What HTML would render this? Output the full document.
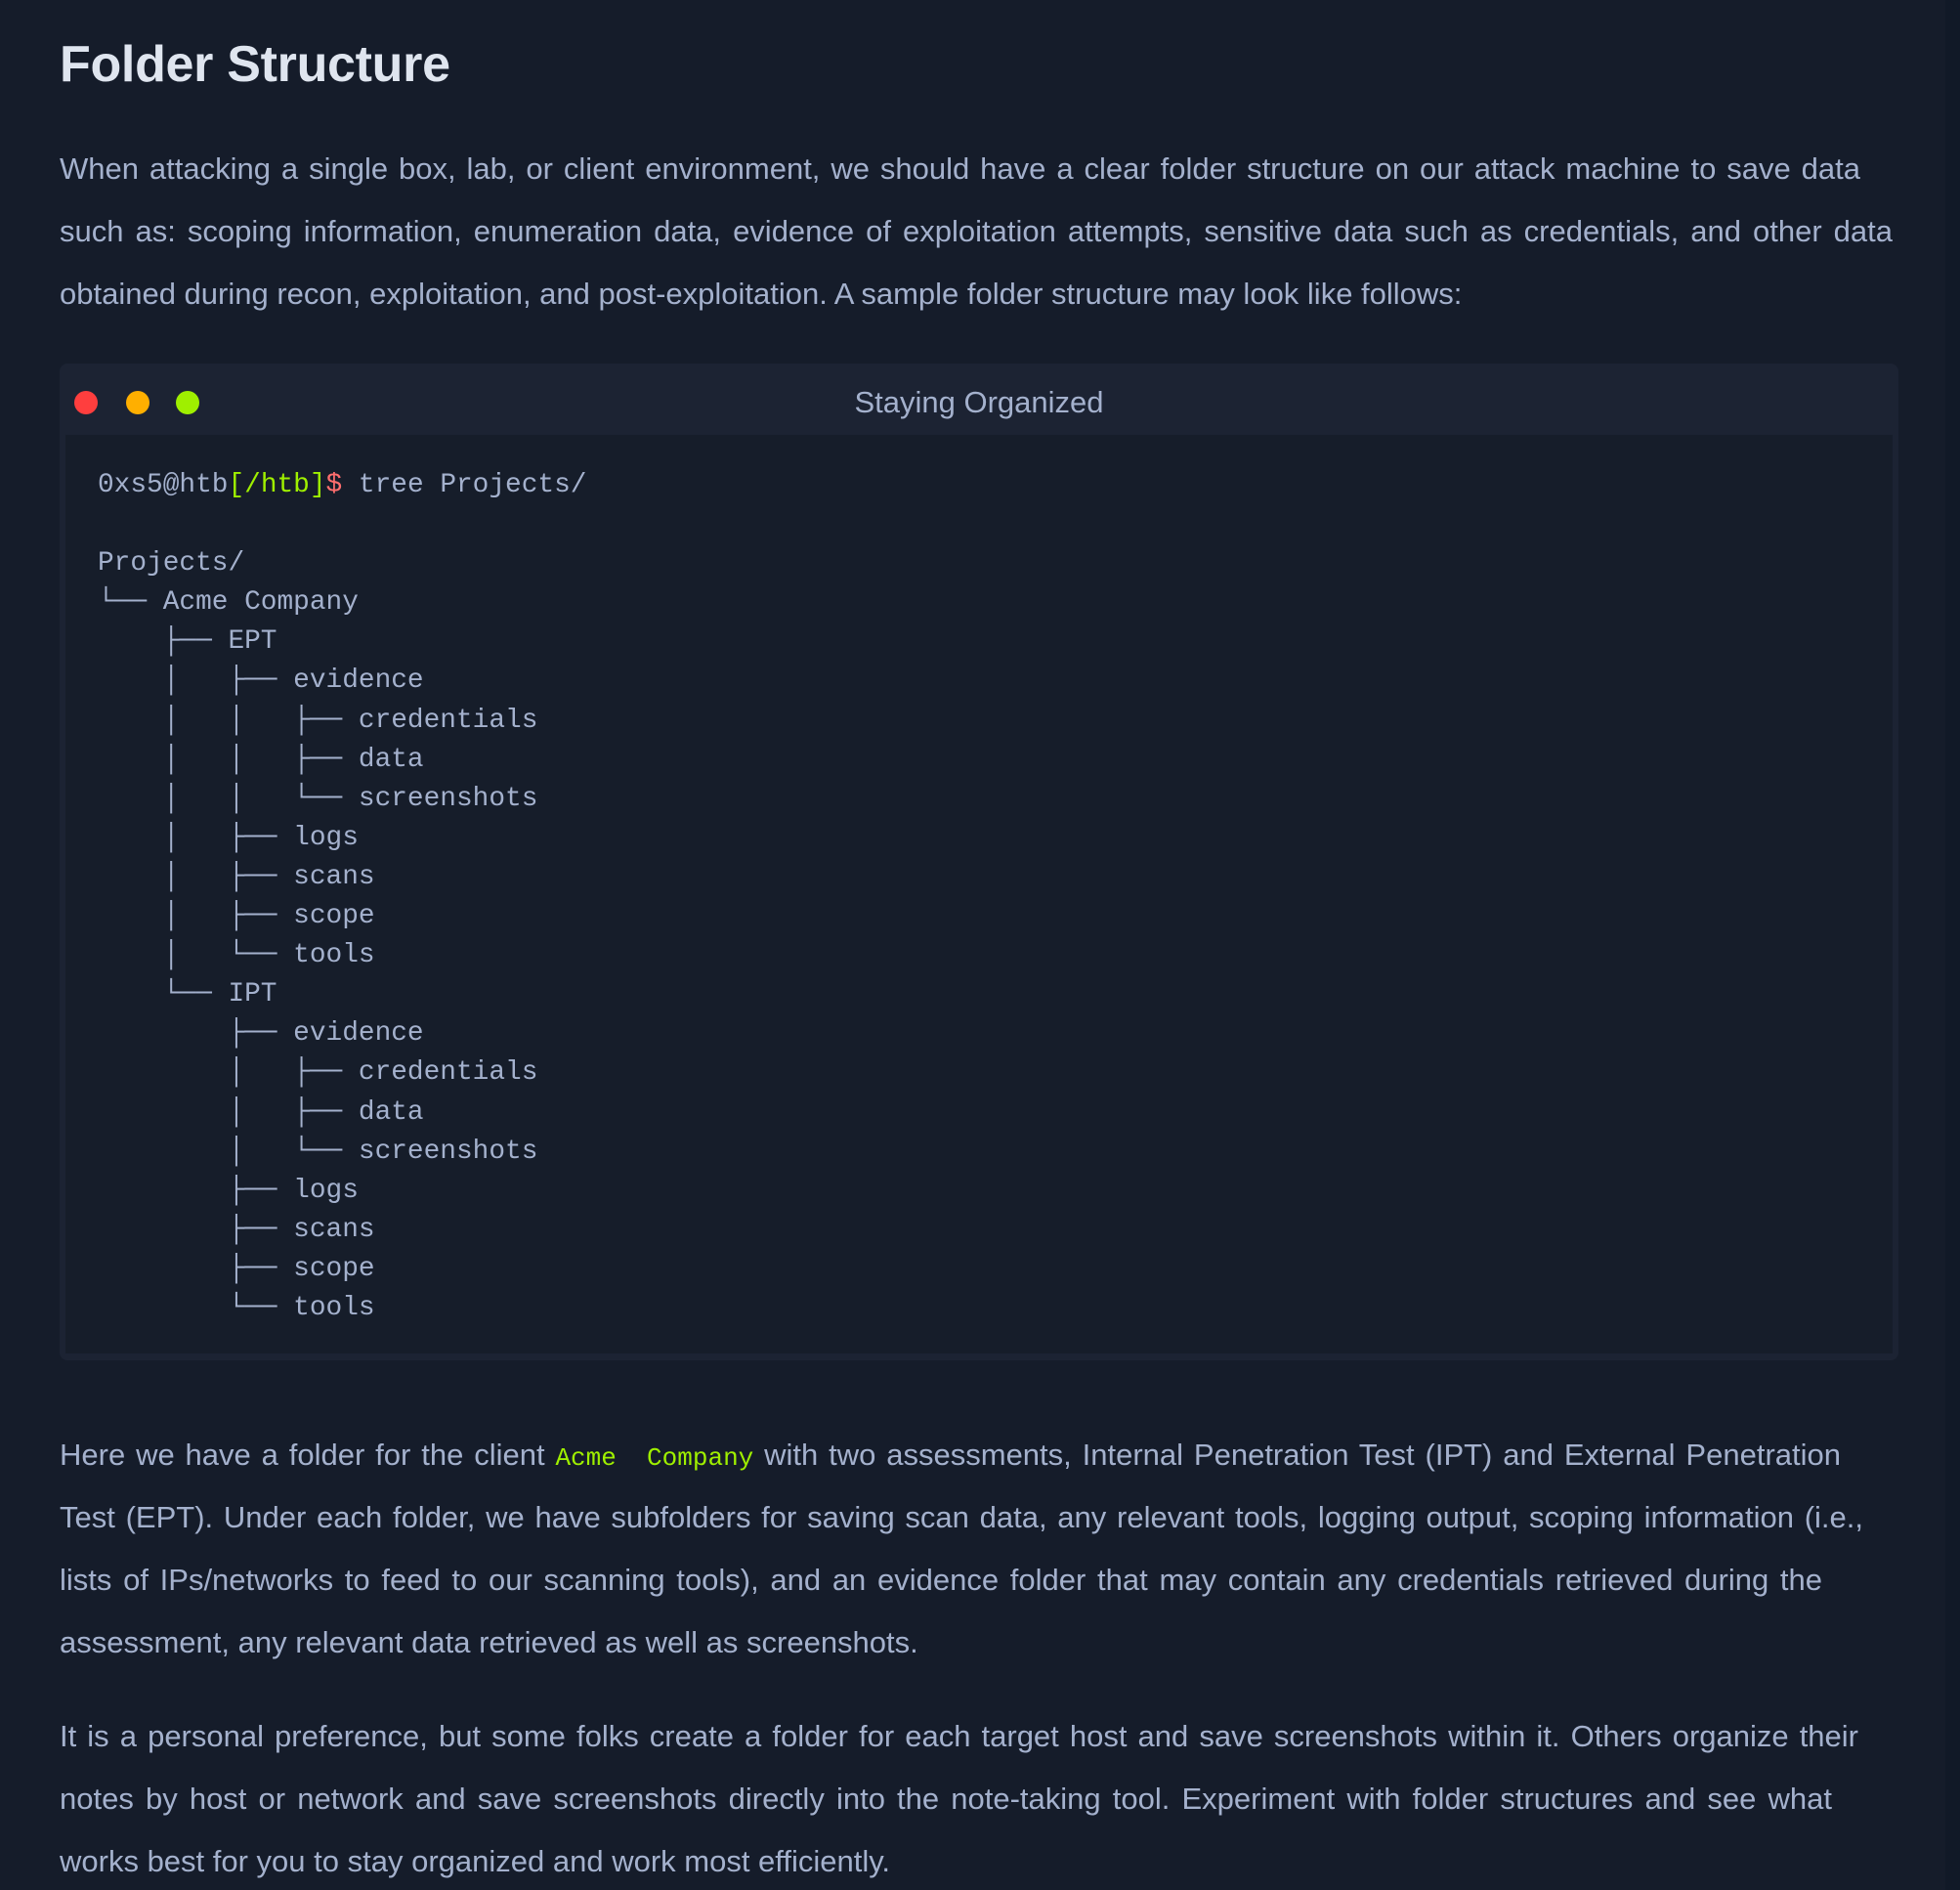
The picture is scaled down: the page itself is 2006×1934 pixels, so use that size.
<!DOCTYPE html>
<html><head><meta charset="utf-8"><style>
html,body{margin:0;padding:0;}
body{width:2006px;height:1934px;background:#151c2a;position:relative;overflow:hidden;font-family:"Liberation Sans",sans-serif;color:#a4b1cd;}
.strip{position:absolute;right:0;top:0;width:15px;height:1934px;background:#111927;}
h1{position:absolute;left:61px;top:31px;margin:0;font-size:52px;line-height:70px;font-weight:bold;color:#dfe5ef;letter-spacing:-0.3px;}
.l{position:absolute;left:61px;font-size:31px;line-height:40px;white-space:nowrap;}
.j{text-align:justify;text-align-last:justify;}
.box{position:absolute;left:61px;top:372px;width:1882px;height:1020px;background:#1c2333;border-radius:8px;}
.body{position:absolute;left:6px;top:73px;width:1870px;height:940px;background:#161d2a;}
.dot{position:absolute;top:28px;width:24px;height:24px;border-radius:50%;}
.title{position:absolute;left:0;width:100%;top:20px;text-align:center;font-size:31px;line-height:40px;color:#a4b1cd;}
pre{position:absolute;left:100px;top:477px;margin:0;font-family:"Liberation Mono","DejaVu Sans Mono",monospace;font-size:27.8px;line-height:40.1px;color:#a4b1cd;}
.g{color:#9fef00}.r{color:#ff6e6e}
code{display:inline-block;font-family:"Liberation Mono",monospace;font-size:26px;color:#9fef00;white-space:pre;}
</style></head><body>
<div class="strip"></div>
<h1>Folder Structure</h1>
<div class="l j" style="top:153px;width:1843px">When attacking a single box, lab, or client environment, we should have a clear folder structure on our attack machine to save data</div>
<div class="l j" style="top:217px;width:1876px">such as: scoping information, enumeration data, evidence of exploitation attempts, sensitive data such as credentials, and other data</div>
<div class="l" style="top:281px">obtained during recon, exploitation, and post-exploitation. A sample folder structure may look like follows:</div>

<div class="box">
<div class="dot" style="left:15px;background:#ff3e3e"></div>
<div class="dot" style="left:68px;background:#ffaf00"></div>
<div class="dot" style="left:119px;background:#9fef00"></div>
<div class="title">Staying Organized</div>
<div class="body"></div>
</div>
<pre>0xs5@htb<span class="g">[/htb]</span><span class="r">$</span> tree Projects/

Projects/
└── Acme Company
    ├── EPT
    │   ├── evidence
    │   │   ├── credentials
    │   │   ├── data
    │   │   └── screenshots
    │   ├── logs
    │   ├── scans
    │   ├── scope
    │   └── tools
    └── IPT
        ├── evidence
        │   ├── credentials
        │   ├── data
        │   └── screenshots
        ├── logs
        ├── scans
        ├── scope
        └── tools</pre>

<div class="l j" style="top:1469px;width:1823px">Here we have a folder for the client <code>Acme  Company</code> with two assessments, Internal Penetration Test (IPT) and External Penetration</div>
<div class="l j" style="top:1533px;width:1846px">Test (EPT). Under each folder, we have subfolders for saving scan data, any relevant tools, logging output, scoping information (i.e.,</div>
<div class="l j" style="top:1597px;width:1804px">lists of IPs/networks to feed to our scanning tools), and an evidence folder that may contain any credentials retrieved during the</div>
<div class="l" style="top:1661px">assessment, any relevant data retrieved as well as screenshots.</div>

<div class="l j" style="top:1757px;width:1841px">It is a personal preference, but some folks create a folder for each target host and save screenshots within it. Others organize their</div>
<div class="l j" style="top:1821px;width:1814px">notes by host or network and save screenshots directly into the note-taking tool. Experiment with folder structures and see what</div>
<div class="l" style="top:1885px">works best for you to stay organized and work most efficiently.</div>
</body></html>
